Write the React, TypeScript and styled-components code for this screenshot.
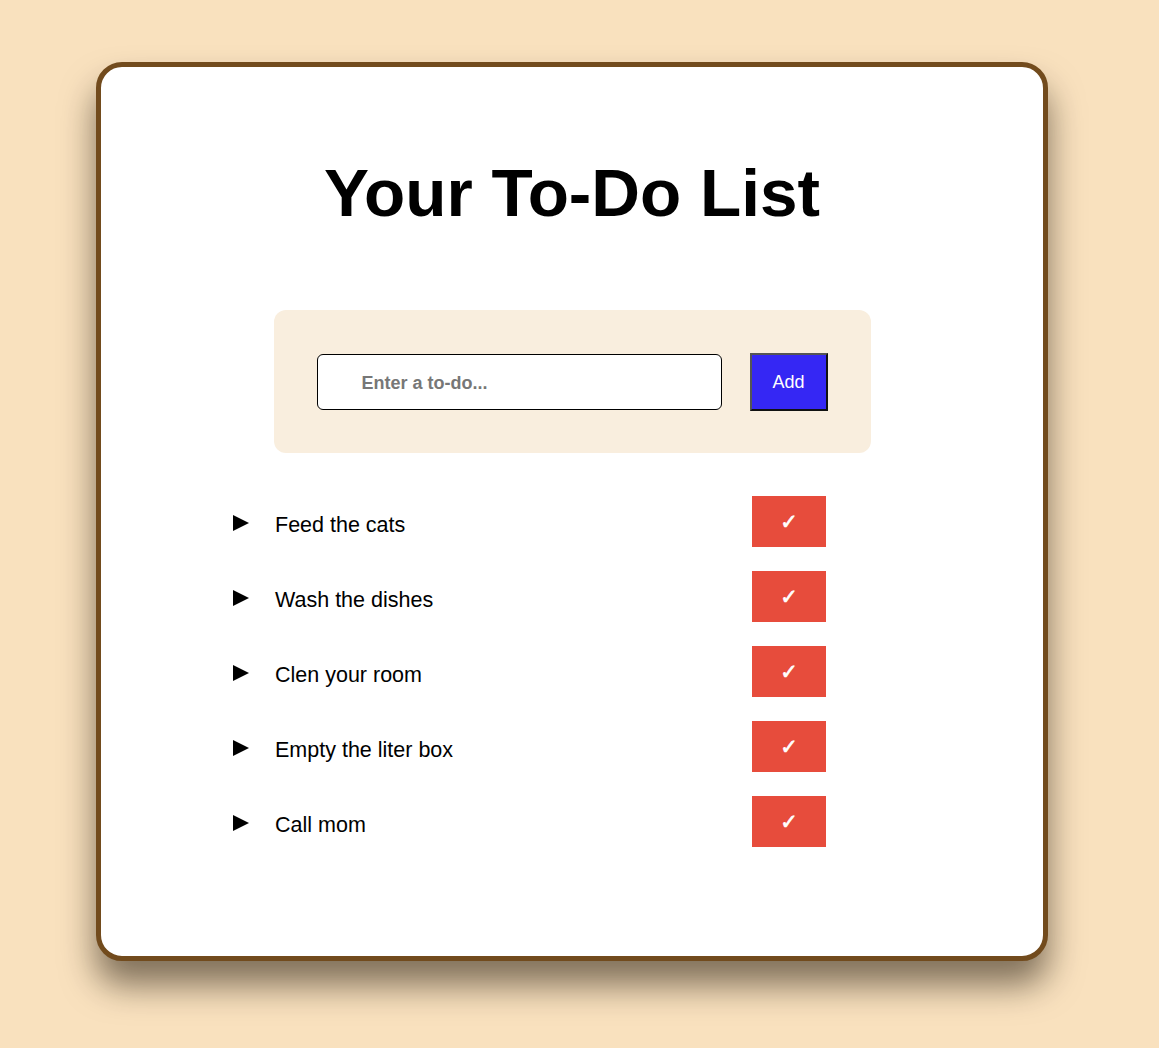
import styled, { createGlobalStyle } from 'styled-components';

const GlobalStyle = createGlobalStyle`
  body {
    margin: 0;
    background: #f9e1be;
    font-family: "Liberation Sans", Arial, sans-serif;
  }
`

const Page = styled.div`
  padding: 62px 0 80px 96px;
`

const Card = styled.div`
  box-sizing: border-box;
  width: 952px;
  height: 899px;
  background: #fff;
  border: 5px solid #724b1d;
  border-radius: 26px;
  box-shadow: 0 24px 34px rgba(30, 20, 10, 0.55);
  display: flex;
  flex-direction: column;
  align-items: center;
`

const Title = styled.h1`
  margin: 86px 0 0;
  font-size: 67.5px;
  line-height: 80px;
  font-weight: 700;
  color: #000;
`

const FormBox = styled.form`
  box-sizing: border-box;
  margin-top: 77px;
  width: 597px;
  height: 143px;
  background: #f9eede;
  border-radius: 12px;
  display: flex;
  align-items: center;
  padding: 0 43px;
  gap: 28px;
`

const TodoInput = styled.input`
  box-sizing: border-box;
  width: 405px;
  height: 56px;
  border: 1px solid #000;
  border-radius: 6px;
  padding: 3px 0 0 44px;
  font-family: "Liberation Sans", Arial, sans-serif;
  font-size: 18px;
  font-weight: 700;
  background: #fff;
  &::placeholder {
    color: #777;
  }
`

const AddButton = styled.button`
  box-sizing: border-box;
  width: 78px;
  height: 58px;
  background: #3527f4;
  color: #fff;
  border: 2px solid;
  border-color: #555 #111 #111 #555;
  padding-top: 2px;
  font-family: "Liberation Sans", Arial, sans-serif;
  font-size: 18px;
`

const List = styled.ul`
  box-sizing: border-box;
  list-style: none;
  margin: 43px 0 0;
  padding: 0 45px 0 0;
  width: 638px;
  display: flex;
  flex-direction: column;
  gap: 24px;
  transform: translateX(-20px);
`

const Row = styled.li`
  display: grid;
  grid-template-columns: 42px 1fr 74px;
  align-items: center;
  height: 51px;
`

const Marker = styled.svg`
  width: 16px;
  height: 16px;
  margin-top: 3px;
`

const TaskText = styled.span`
  font-size: 21.5px;
  color: #000;
  margin-top: 7px;
`

const DoneButton = styled.button`
  width: 74px;
  height: 51px;
  border: none;
  background: #e74c3c;
  color: #fff;
  font-family: "DejaVu Sans", sans-serif;
  font-size: 21px;
  -webkit-text-stroke: 0.7px #fff;
  padding: 0;
`

const todos = ['Feed the cats', 'Wash the dishes', 'Clen your room', 'Empty the liter box', 'Call mom']

function App() {
  return (
    <>
      <GlobalStyle />
      <Page>
        <Card>
          <Title>Your To-Do List</Title>
          <FormBox onSubmit={(e) => e.preventDefault()}>
            <TodoInput type="text" placeholder="Enter a to-do..." />
            <AddButton type="submit">Add</AddButton>
          </FormBox>
          <List>
            {todos.map((title) => (
              <Row key={title}>
                <Marker viewBox="0 0 16 16">
                  <polygon points="0,0 16,8 0,16" fill="#000" />
                </Marker>
                <TaskText>{title}</TaskText>
                <DoneButton>✓</DoneButton>
              </Row>
            ))}
          </List>
        </Card>
      </Page>
    </>
  );
}

export default App;
